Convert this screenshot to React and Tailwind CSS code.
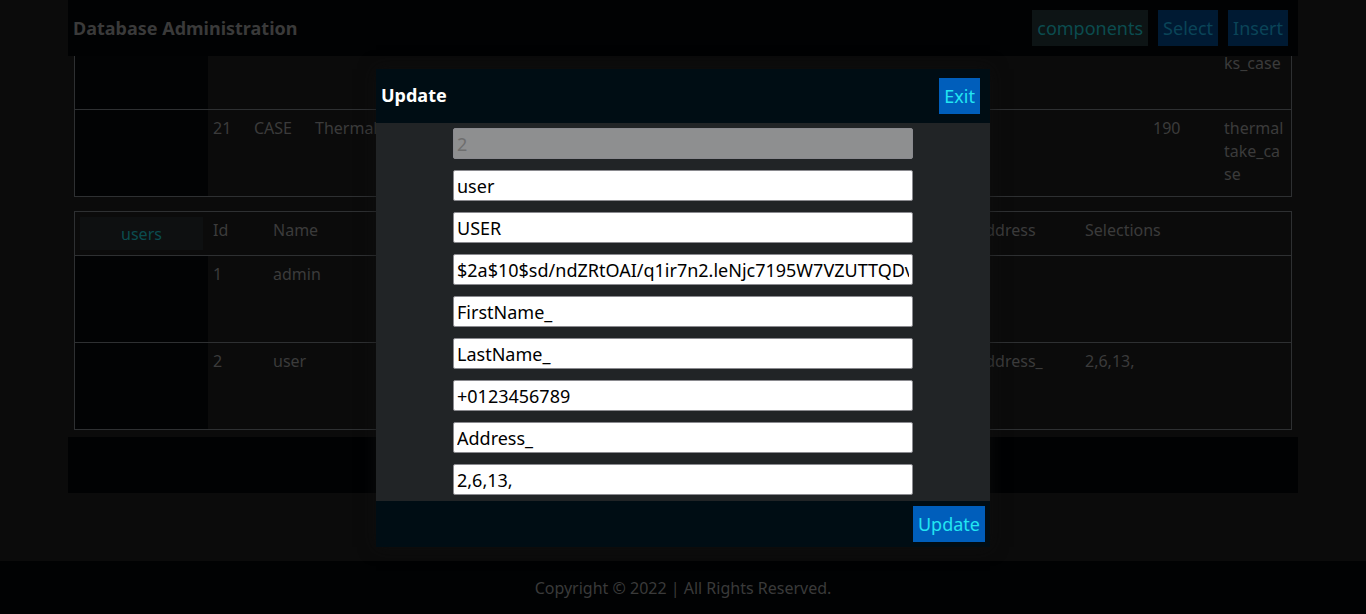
import React from 'react';

const userCols = [
  { label: 'Id', w: 'w-[60px]' },
  { label: 'Name', w: 'w-[110px]' },
  { label: 'Role', w: 'w-[90px]' },
  { label: 'Password', w: 'w-[200px]' },
  { label: 'FirstName', w: 'w-[110px]' },
  { label: 'LastName', w: 'w-[100px]' },
  { label: 'Phone', w: 'w-[92px]' },
  { label: 'Address', w: 'w-[110px]' },
  { label: 'Selections', w: 'flex-1' },
];

const users = [
  ['1', 'admin', 'ADMIN', '$2a$10$...', 'First', 'Last', '+00000', '', ''],
  ['2', 'user', 'USER', '$2a$10$...', 'First_', 'Last_', '+01234', 'Address_', '2,6,13,'],
];

const fields = [
  { value: '2', disabled: true },
  { value: 'user' },
  { value: 'USER' },
  { value: '$2a$10$sd/ndZRtOAI/q1ir7n2.leNjc7195W7VZUTTQDvXqfBqaGS' },
  { value: 'FirstName_' },
  { value: 'LastName_' },
  { value: '+0123456789' },
  { value: 'Address_' },
  { value: '2,6,13,' },
];

const Cell = ({ className = '', children }) => (
  <div className={`px-[5px] pt-[7px] leading-[23px] overflow-hidden ${className}`}>{children}</div>
);

export default function App() {
  return (
    <div
      className="min-h-screen bg-[#0b0b0b] text-[#3b3b3b] text-base"
      style={{ fontFamily: '"Noto Sans", "Open Sans", sans-serif' }}
    >
      <div className="mx-auto w-[1230px] bg-[#0b0b0b]">
        {/* top bar */}
        <div className="h-14 bg-[#010203] flex items-center justify-between pl-[5px] pr-[10px]">
          <h1 className="text-[18px] font-bold text-[#3a3a3a]">Database Administration</h1>
          <div className="flex items-center gap-[10px]">
            <button className="h-9 px-[5px] bg-[#0d1415] text-[18px] text-[#0b4c4f]">components</button>
            <button className="h-9 px-[5px] bg-[#001a33] text-[18px] text-[#0a4458]">Select</button>
            <button className="h-9 px-[5px] bg-[#001a33] text-[18px] text-[#0a4458]">Insert</button>
          </div>
        </div>

        <div className="px-[6px]">
          {/* components table (scrolled) */}
          <div className="border-x border-b border-[#2e3032]">
            <div className="flex h-[54px] border-b border-[#2e3032] overflow-hidden">
              <div className="w-[133px] bg-[#020304]" />
              <div className="flex-1" />
              <div className="w-[72px] px-[5px] -mt-1 leading-[23px]">ks_case</div>
            </div>
            <div className="flex h-[86px]">
              <div className="w-[133px] bg-[#020304]" />
              <Cell className="w-[41px]">21</Cell>
              <Cell className="w-[61px]">CASE</Cell>
              <Cell className="flex-1">Thermaltake Core V21</Cell>
              <Cell className="w-[71px]">190</Cell>
              <Cell className="w-[72px]">
                thermal
                <br />
                take_ca
                <br />
                se
              </Cell>
            </div>
          </div>

          {/* users table */}
          <div className="mt-[14px] border border-[#2e3032]">
            <div className="flex h-[44px] border-b border-[#2e3032]">
              <div className="w-[133px] pl-[5px] pt-[5px]">
                <div className="w-[123px] h-[33px] bg-[#0e1011] flex items-center justify-center text-[#0b4c4f]">
                  users
                </div>
              </div>
              {userCols.map((c) => (
                <Cell key={c.label} className={c.w}>
                  {c.label}
                </Cell>
              ))}
            </div>
            {users.map((u, i) => (
              <div
                key={u[0]}
                className={`flex ${i === 0 ? 'h-[87px] border-b border-[#2e3032]' : 'h-[86px]'}`}
              >
                <div className="w-[133px] bg-[#020304]" />
                {u.map((v, j) => (
                  <Cell key={j} className={userCols[j].w}>
                    {v}
                  </Cell>
                ))}
              </div>
            ))}
          </div>
        </div>

        <div className="mt-[7px] h-14 bg-[#010203]" />
        <div className="h-[68px]" />
      </div>

      <footer className="h-[53px] bg-[#010203] flex items-center justify-center text-[#3a3a3a]">
        Copyright © 2022 | All Rights Reserved.
      </footer>

      {/* update dialog */}
      <div className="fixed inset-0 flex justify-center items-start pt-[69px]">
        <div className="w-[614px] shadow-[0_0_16px_rgba(16,16,16,0.7)]">
          <div className="h-[54px] bg-[#000d14] flex items-center justify-between pl-[5px] pr-[10px]">
            <h2 className="text-[18px] font-bold text-white -mt-px">Update</h2>
            <button className="h-9 px-[5px] bg-[#005ebb] text-[18px] text-[#22e6f2]">Exit</button>
          </div>
          <div className="bg-[#212426] pt-[5px] pb-[6px] flex flex-col items-center gap-[11px]">
            {fields.map((f, i) => (
              <input
                key={i}
                readOnly
                disabled={f.disabled}
                value={f.value}
                className={`w-[460px] h-[31px] px-[3px] rounded-[2px] border border-[#8a8a8f] text-[18px] outline-none ${
                  f.disabled ? 'bg-[#8e8f90] text-[#6e6e6e]' : 'bg-white text-black'
                }`}
              />
            ))}
          </div>
          <div className="h-[46px] bg-[#000d14] flex items-center justify-end pr-[5px]">
            <button className="h-9 px-[5px] bg-[#005ebb] text-[18px] text-[#22e6f2]">Update</button>
          </div>
        </div>
      </div>
    </div>
  );
}
